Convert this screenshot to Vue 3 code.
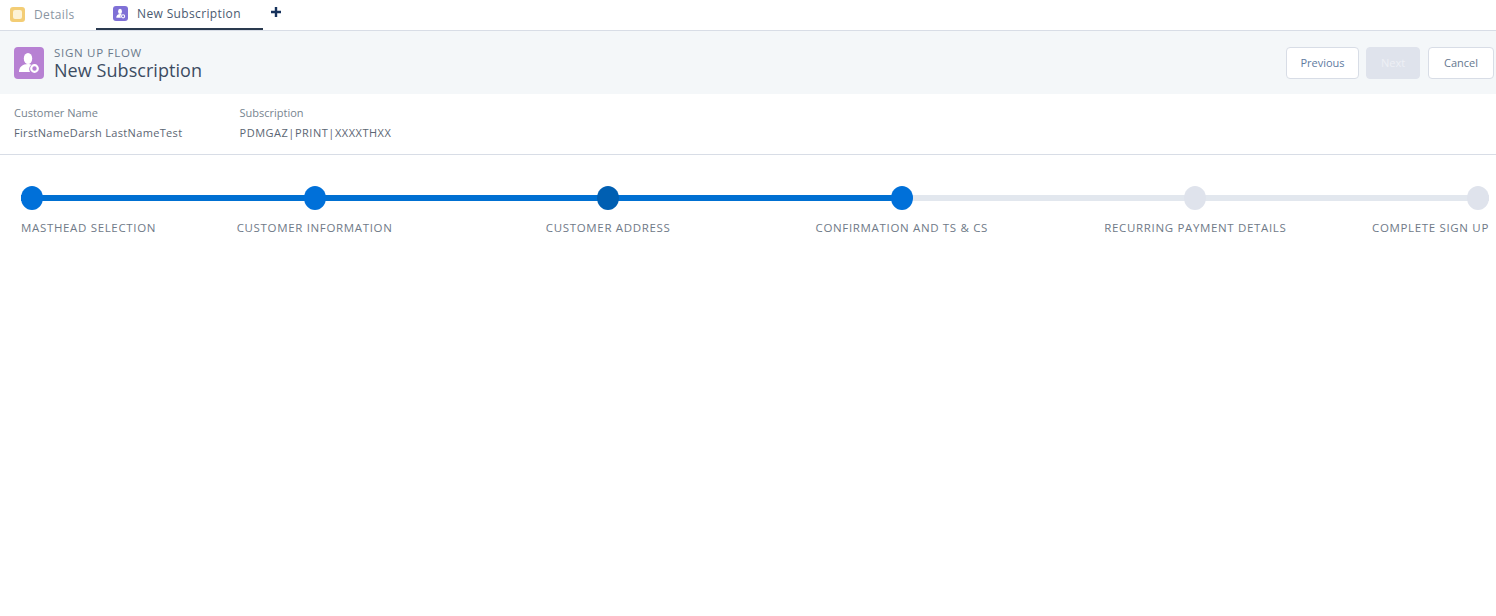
<template>
  <div class="page">
    <nav class="tabs">
      <a class="tab">
        <span class="tab-icon yellow"><span class="note"></span></span>
        <span class="tab-label">Details</span>
      </a>
      <a class="tab active">
        <span class="tab-icon violet">
          <svg viewBox="0 0 30 32" width="15" height="15">
            <ellipse cx="14" cy="11.500" rx="4.200" ry="5.500" fill="#fff" />
            <path d="M6 25c0-5 3-8 8-8 1.500 0 2.500.3 3.500.8-2.500 1.700-3 4.700-1.500 7.200z" fill="#fff" />
            <circle cx="20.500" cy="22" r="3.400" fill="none" stroke="#fff" stroke-width="2.200" />
          </svg>
        </span>
        <span class="tab-label">New Subscription</span>
      </a>
      <svg class="plus" viewBox="0 0 12 12" width="12" height="12">
        <path d="M6 1v10M1 6h10" stroke="#16325c" stroke-width="2.400" />
      </svg>
    </nav>

    <header class="head">
      <div class="head-title">
        <span class="head-icon">
          <svg viewBox="0 0 30 32" width="30" height="32">
            <ellipse cx="14" cy="11.500" rx="4.200" ry="5.500" fill="#fff" />
            <path d="M5 25c0-5 3.500-8 9-8 1.500 0 2.500.3 3.500.8-2.500 1.700-3 4.700-1.500 7.200z" fill="#fff" />
            <circle cx="20.500" cy="21.500" r="3.300" fill="none" stroke="#fff" stroke-width="2.200" />
          </svg>
        </span>
        <div class="head-text">
          <div class="eyebrow">SIGN UP FLOW</div>
          <h1>New Subscription</h1>
        </div>
      </div>
      <div class="actions">
        <button class="btn">Previous</button>
        <button class="btn disabled">Next</button>
        <button class="btn">Cancel</button>
      </div>
    </header>

    <section class="fields">
      <div class="field name">
        <div class="field-label">Customer Name</div>
        <div class="field-value">FirstNameDarsh LastNameTest</div>
      </div>
      <div class="field">
        <div class="field-label">Subscription</div>
        <div class="field-value wide">PDMGAZ|PRINT|XXXXTHXX</div>
      </div>
    </section>

    <ol class="path">
      <li
        v-for="(s, i) in steps"
        :key="s.label"
        class="step"
        :class="{ first: i === 0, last: i === steps.length - 1 }"
      >
        <span class="dot" :class="s.state"></span>
        <span class="step-label">{{ s.label }}</span>
      </li>
    </ol>
  </div>
</template>

<script setup>
const steps = [
  { label: 'MASTHEAD SELECTION', state: 'done' },
  { label: 'CUSTOMER INFORMATION', state: 'done' },
  { label: 'CUSTOMER ADDRESS', state: 'dark' },
  { label: 'CONFIRMATION AND TS & CS', state: 'done' },
  { label: 'RECURRING PAYMENT DETAILS', state: 'todo' },
  { label: 'COMPLETE SIGN UP', state: 'todo' }
]
</script>

<style>
html, body { margin: 0; background: #fff; }
</style>

<style scoped>
.page {
  width: 1496px;
  height: 616px;
  overflow: hidden;
  background: #fff;
  font-family: "Open Sans", "Liberation Sans", sans-serif;
  color: #54698d;
}
.tabs {
  display: flex;
  align-items: flex-start;
  height: 30px;
  border-bottom: 1px solid #d8dde6;
  box-sizing: content-box;
}
.tab {
  display: flex;
  align-items: center;
  height: 28px;
  font-size: 12px;
  letter-spacing: .36px;
}
.tab:first-child {
  width: 96px;
  padding-left: 10px;
  box-sizing: border-box;
}
.tab.active {
  width: 167px;
  padding-left: 17px;
  box-sizing: border-box;
  border-bottom: 2px solid #2a3a4f;
  height: 30px;
  padding-bottom: 2px;
}
.tab-label { margin-left: 9px; color: #8a95a2; }
.active .tab-label { color: #4a5a70; }
.tab-icon {
  width: 15px;
  height: 15px;
  border-radius: 3px;
  display: flex;
  align-items: center;
  justify-content: center;
  flex: none;
}
.yellow { background: #f3cd75; }
.note { width: 9px; height: 9px; border-radius: 2px; background: #fdf3d6; }
.violet { background: #7f70d6; }
.plus { margin: 6px 0 0 7px; }
.head {
  height: 63px;
  background: #f4f7f9;
  display: flex;
  align-items: center;
  justify-content: space-between;
  padding: 0 2px 0 14px;
}
.head-title { display: flex; align-items: center; }
.head-icon {
  width: 30px;
  height: 32px;
  border-radius: 4px;
  background: #b781d3;
  display: block;
}
.head-icon svg { display: block; }
.head-text { margin-left: 10px; }
.eyebrow {
  font-size: 11.500px;
  line-height: 14px;
  letter-spacing: .72px;
  margin-top: 1px;
  color: #6b7a8c;
}
h1 {
  margin: 0;
  font-size: 18px;
  line-height: 21px;
  font-weight: 400;
  letter-spacing: .06px;
  color: #3c4c62;
}
.actions { display: flex; gap: 7px; }
.btn {
  height: 32px;
  box-sizing: border-box;
  border: 1px solid #d8dde6;
  border-radius: 4px;
  background: #fff;
  color: #5f7b9f;
  font: inherit;
  font-size: 11px;
  padding: 0;
  width: 73px;
}
.btn.disabled {
  width: 54px;
  margin-right: 1px;
  background: #dfe3ec;
  border-color: #dfe3ec;
  color: #eef0f5;
}
.btn:last-child { width: 66px; color: #66788f; }
.fields {
  height: 60px;
  box-sizing: content-box;
  display: flex;
  padding-left: 14px;
  border-bottom: 1px solid #d8dde6;
}
.field { padding-top: 11px; }
.field.name { width: 225.500px; }
.field-label { font-size: 11px; line-height: 16px; color: #77848f; }
.field-value {
  font-size: 11px;
  line-height: 16px;
  margin-top: 4px;
  letter-spacing: .33px;
  color: #5b6673;
}
.field-value.wide { letter-spacing: .52px; }
.path {
  list-style: none;
  margin: 31px 7px 0 21px;
  padding: 0;
  height: 60px;
  display: flex;
  justify-content: space-between;
  background: linear-gradient(to right, #0070d2 60%, #e2e7ee 60%) no-repeat 0 9px / 100% 6px;
}
.step {
  width: 0;
  display: flex;
  flex-direction: column;
  align-items: center;
  white-space: nowrap;
}
.step.first { align-items: flex-start; }
.step.last { align-items: flex-end; }
.dot {
  width: 22px;
  height: 24px;
  border-radius: 50%;
  flex: none;
}
.dot.done { background: #0070d9; }
.dot.dark { background: #005fb2; }
.dot.todo { background: #dfe3ec; }
.step-label {
  margin-top: 10px;
  font-size: 11.500px;
  line-height: 16px;
  letter-spacing: .66px;
  color: #6f7a88;
}
</style>
